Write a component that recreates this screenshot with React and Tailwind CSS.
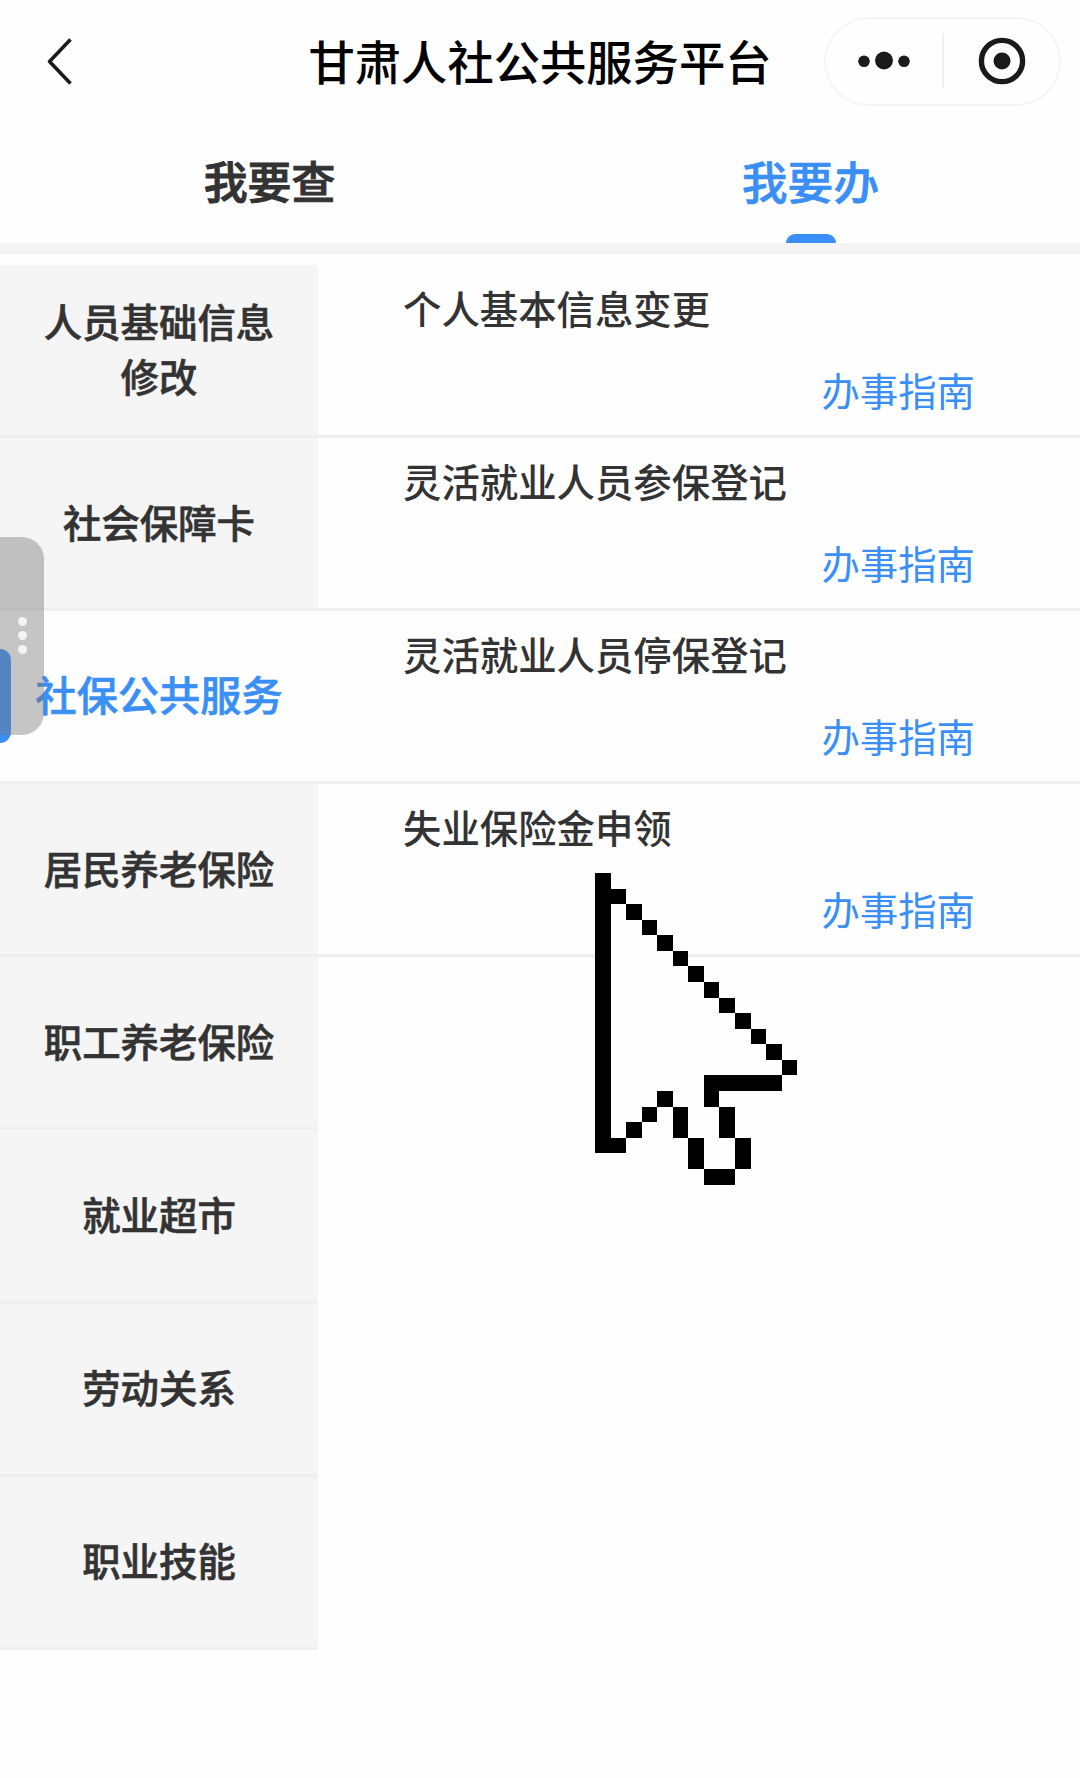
import React, { useState } from 'react';
import clsx from 'clsx';

const tabs = ['我要查', '我要办'];

const categories = [
  '人员基础信息修改',
  '社会保障卡',
  '社保公共服务',
  '居民养老保险',
  '职工养老保险',
  '就业超市',
  '劳动关系',
  '职业技能',
];

const services = ['个人基本信息变更', '灵活就业人员参保登记', '灵活就业人员停保登记', '失业保险金申领'];

// Arrow on a 13 x 20 grid: # is outline, o is fill
const cursorRows = [
  '#',
  '##',
  '#o#',
  '#oo#',
  '#ooo#',
  '#oooo#',
  '#ooooo#',
  '#oooooo#',
  '#ooooooo#',
  '#oooooooo#',
  '#ooooooooo#',
  '#oooooooooo#',
  '#ooooooooooo#',
  '#oooooo#####',
  '#ooo#oo#',
  '#oo# #oo#',
  '#o#  #oo#',
  '##    #oo#',
  '      #oo#',
  '       ##',
];

const Header = () => (
  <header className="relative h-[124px] shrink-0 flex items-center justify-center pb-[3px]">
    <h1 className="text-[46.3px] leading-[60px] font-medium text-black -mt-[2px]">甘肃人社公共服务平台</h1>
    <button className="absolute left-[44px] top-[36px]">
      <svg width="32" height="52" viewBox="0 0 32 52" fill="none" stroke="#1a1a1a" strokeWidth="3.6">
        <path d="M26.5 3.5 L5.5 25.5 L26.5 47.5" strokeLinejoin="round" />
      </svg>
    </button>
    <div className="absolute left-[824px] top-[17px] w-[237px] h-[89px] rounded-full border-2 border-[#f5f5f5] flex items-center">
      <svg width="233" height="85" viewBox="0 0 233 85">
        <g fill="#1a1a1a">
          <circle cx="38" cy="42.3" r="5.8" />
          <circle cx="58" cy="41.5" r="9" />
          <circle cx="78" cy="42.3" r="5.8" />
          <circle cx="176" cy="42" r="8.5" />
        </g>
        <path d="M117.3 14.5v55" stroke="#ececec" strokeWidth="1.5" />
        <circle cx="176" cy="42" r="20.6" fill="none" stroke="#1a1a1a" strokeWidth="5.4" />
      </svg>
    </div>
  </header>
);

const Cursor = () => (
  <svg
    className="absolute left-[595.4px] top-[873.4px] pointer-events-none"
    width="202.3"
    height="311.5"
    viewBox="0 0 13 20"
    preserveAspectRatio="none"
    shapeRendering="crispEdges"
  >
    {cursorRows.map((row, y) =>
      row.split('').map((c, x) =>
        c === ' ' ? null : <rect key={`${x}-${y}`} x={x} y={y} width="1" height="1" fill={c === '#' ? '#000' : '#fefefe'} />
      )
    )}
  </svg>
);

const App = () => {
  const [activeTab, setActiveTab] = useState(1);
  const [activeCategory, setActiveCategory] = useState(2);

  return (
    <div className="relative w-[1080px] h-[1778px] bg-[#fefefe] flex flex-col overflow-hidden text-[#333] font-['Noto_Sans_CJK_SC',sans-serif]">
      <Header />

      <nav className="h-[130px] shrink-0 flex border-b-[11px] border-[#f4f4f4]">
        {tabs.map((tab, i) => (
          <button
            key={tab}
            onClick={() => setActiveTab(i)}
            className={clsx(
              'flex-1 flex flex-col items-center justify-between pt-[26px] font-medium',
              i === activeTab
                ? 'text-[45.8px] text-[#3a8ff7] [-webkit-text-stroke:0.6px]'
                : 'text-[43.9px] pr-[2px] [-webkit-text-stroke:1px]'
            )}
          >
            <span className="leading-[60px]">{tab}</span>
            {i === activeTab && <span className="w-[50px] h-[9px] rounded-t-[9px] bg-[#3a8ff7]"></span>}
          </button>
        ))}
      </nav>

      <main className="flex-1 flex items-start">
        <aside className="w-[318px] mt-[11px] shrink-0">
          {categories.map((name, i) => (
            <button
              key={name}
              onClick={() => setActiveCategory(i)}
              className={clsx(
                'relative w-full h-[173.1px] px-[38px] flex items-center justify-center text-center border-b-[3px] border-[#efefef] leading-[55px] font-medium [-webkit-text-stroke:0.6px]',
                i === activeCategory
                  ? 'pb-[6px] bg-[#fefefe] text-[#3a8ff7] text-[41.2px] whitespace-nowrap'
                  : 'pb-[4px] bg-[#f5f5f5] text-[38.4px]'
              )}
            >
              {i === activeCategory && (
                <span className="absolute left-0 top-[38px] w-[11px] h-[94px] rounded-r-[11px] bg-[#3a8ff7]"></span>
              )}
              {name}
            </button>
          ))}
        </aside>

        <section className="flex-1 mt-[11px]">
          {services.map((name) => (
            <div key={name} className="h-[173.1px] pl-[85px] pr-[105px] pt-[13.6px] flex flex-col border-b-[3px] border-[#efefef]">
              <p className="text-[38.4px] leading-[56px] font-medium">{name}</p>
              <a className="self-end mt-[26px] text-[38.4px] leading-[56px] text-[#3a8ff7]">办事指南</a>
            </div>
          ))}
        </section>
      </main>

      <div className="absolute left-0 top-[537px] w-[44px] h-[198px] rounded-r-[22px] bg-[rgba(119,119,122,0.42)]">
        <div className="absolute left-[17.5px] top-[80px] flex flex-col gap-[5px]">
          <span className="size-[9px] rounded-full bg-[#f4f4f4]"></span>
          <span className="size-[9px] rounded-full bg-[#f4f4f4]"></span>
          <span className="size-[9px] rounded-full bg-[#f4f4f4]"></span>
        </div>
      </div>

      <Cursor />
    </div>
  );
};

export default App;
